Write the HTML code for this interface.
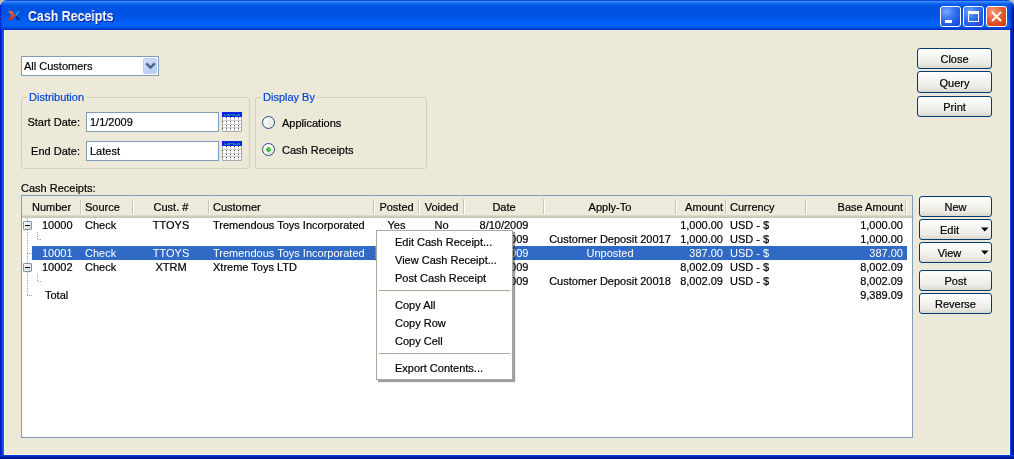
<!DOCTYPE html><html><head><meta charset="utf-8"><style>
*{box-sizing:border-box}
body{-webkit-text-stroke:0.2px currentColor;margin:0;width:1014px;height:459px;overflow:hidden;position:relative;background:#C9C2AC;font-family:"Liberation Sans",sans-serif;font-size:11px;color:#000}
.a{position:absolute}
.t{position:absolute;line-height:14px;white-space:nowrap;will-change:transform}
.btn{will-change:transform;position:absolute;border:1px solid #003C74;border-radius:3px;background:linear-gradient(to bottom,#FFFFFF 0%,#F5F4F0 40%,#ECEBE5 75%,#DCD8CC 100%);text-align:center;line-height:14px}
.inp{position:absolute;border:1px solid #7F9DB9;background:#fff}
.grp{position:absolute;border:1px solid #D0D0BF;border-radius:3px}
.gt{will-change:transform;position:absolute;line-height:14px;color:#0046D5;background:#ECE9D8;padding:0 2px;white-space:nowrap}
.sep{position:absolute;width:2px;top:199px;height:15px;border-left:1px solid #C7C5B2;border-right:1px solid #FFFFFF}
</style></head><body>
<div class="a" style="left:0;top:0;width:1014px;height:30px;border-radius:7px 7px 0 0;background:linear-gradient(to bottom,#1448DC 0px,#1448DC 1px,#3E92FF 1px,#2F84FA 2px,#1870F4 3px,#0A5EEC 4px,#0054E4 6px,#0052E2 14px,#0056E8 18px,#005EF2 21px,#0064FA 24px,#0062F8 26px,#0054EA 27px,#0046DA 28px,#003CCE 29px,#0036C4 30px)"></div>
<div class="a" style="left:0;top:5px;width:3px;height:25px;background:linear-gradient(to right,#0018C8 0px,#0A36DA 1px,rgba(14,80,236,0.5) 2px,rgba(14,80,236,0) 3px)"></div>
<div class="a" style="left:0;top:30px;width:4px;height:429px;background:linear-gradient(to right,#0012C4 0px,#0018CC 1px,#0840E4 2px,#0E5AF2 3px,#0E5EF4 4px)"></div>
<div class="a" style="left:1008px;top:2px;width:6px;height:28px;background:linear-gradient(to right,rgba(10,72,234,0) 0px,rgba(0,60,220,.35) 2px,rgba(0,54,212,.7) 3px,#0026B0 4px,#00168C 5px,#00168C 6px);-webkit-mask-image:linear-gradient(to bottom,transparent 0px,#000 8px)"></div>
<div class="a" style="left:1010px;top:30px;width:4px;height:429px;background:linear-gradient(to right,#0A48EA 0px,#0036D4 1px,#0022A8 2px,#00168C 3px,#00168C 4px)"></div>
<div class="a" style="left:0;top:455px;width:1014px;height:4px;background:linear-gradient(to bottom,#0A48EA 0px,#0036D4 1px,#0022A8 2px,#00168C 3px,#00168C 4px)"></div>
<div class="a" style="left:0;top:455px;width:4px;height:4px;background:linear-gradient(to bottom,#0A40E2 0px,#0030C8 1px,#0020A8 2px,#00168C 3px)"></div>
<div class="a" style="left:4px;top:30px;width:1006px;height:425px;background:#ECE9D8;box-shadow:inset 1px 0 #FBF6E2,inset -1px -1px #FBF6E2"></div>
<svg class="a" style="left:8px;top:11px" width="13" height="9" viewBox="0 0 13 9">
<defs><linearGradient id="or" x1="0" y1="0" x2="0" y2="1"><stop offset="0" stop-color="#E07030"/><stop offset="1" stop-color="#C82A1A"/></linearGradient></defs>
<path d="M0 0 H4 L7.5 4.5 L4 9 H0 L3.5 4.5 Z" fill="url(#or)"/>
<path d="M7 4.2 L10 0 H12 L8.3 4.8 Z" fill="#1AA6E0"/>
<path d="M7.4 5.6 L8.6 4.9 L12.2 9 H9.2 Z" fill="#0A2478"/>
</svg>
<div class="t" style="left:27.5px;top:7px;font-size:14px;font-weight:bold;color:#fff;-webkit-text-stroke:0;line-height:18px;text-shadow:1px 1px #0A1E8C;transform:scaleX(0.885);transform-origin:0 0">Cash Receipts</div>
<div class="a" style="left:940px;top:6px;width:21px;height:21px;border:1px solid #fff;border-radius:3px;background:radial-gradient(circle at 30% 25%,#7AA8FF 0%,#3C78F0 35%,#2258E8 70%,#1846D0 100%);overflow:hidden"><div class="a" style="left:4px;top:13px;width:7px;height:3px;background:#fff"></div></div>
<div class="a" style="left:963px;top:6px;width:21px;height:21px;border:1px solid #fff;border-radius:3px;background:radial-gradient(circle at 30% 25%,#7AA8FF 0%,#3C78F0 35%,#2258E8 70%,#1846D0 100%);overflow:hidden"><div class="a" style="left:4px;top:4px;width:11px;height:11px;border:1px solid #fff;border-top-width:3px"></div></div>
<div class="a" style="left:986px;top:6px;width:21px;height:21px;border:1px solid #fff;border-radius:3px;background:radial-gradient(circle at 30% 25%,#F0A080 0%,#E86A40 35%,#D84818 75%,#C03808 100%);overflow:hidden"><svg class="a" style="left:0;top:0" width="19" height="19"><path d="M5 5 L14 14 M14 5 L5 14" stroke="#fff" stroke-width="2"/></svg></div>
<div class="inp" style="left:21px;top:56px;width:138px;height:20px"></div>
<div class="t" style="left:24px;top:59px;">All Customers</div>
<div class="a" style="left:143px;top:58px;width:14px;height:16px;border-radius:2px;background:linear-gradient(135deg,#D8E2FB,#C2D3F8 50%,#B2C8F6);border:1px solid #BCCDF4"></div>
<svg class="a" style="left:143px;top:58px" width="15" height="16"><path d="M3.3 5.3 L7.5 9.5 L11.7 5.3" stroke="#4D6185" stroke-width="2.4" fill="none"/></svg>
<div class="grp" style="left:21px;top:97px;width:229px;height:72px"></div>
<div class="gt" style="left:27px;top:90px">Distribution</div>
<div class="grp" style="left:255px;top:97px;width:172px;height:72px"></div>
<div class="gt" style="left:261px;top:90px">Display By</div>
<div class="t" style="left:26px;top:115px;width:54px;text-align:right;">Start Date:</div>
<div class="inp" style="left:86px;top:112px;width:133px;height:20px"></div>
<div class="t" style="left:90px;top:115px;">1/1/2009</div>
<div class="t" style="left:26px;top:144px;width:54px;text-align:right;">End Date:</div>
<div class="inp" style="left:86px;top:141px;width:133px;height:20px"></div>
<div class="t" style="left:90px;top:144px;">Latest</div>
<svg class="a" style="left:222px;top:112px" width="20" height="20" viewBox="0 0 20 20">
<rect x="0" y="0" width="20" height="20" fill="#FFFFFF"/>
<rect x="0" y="0" width="20" height="5" fill="#0A22E6"/>
<rect x="2" y="2" width="16" height="2" fill="#1A78C8"/>
<rect x="3" y="2" width="2" height="1" fill="#103070"/><rect x="8" y="3" width="3" height="1" fill="#103070"/><rect x="13" y="2" width="2" height="1" fill="#103070"/>
<path d="M4.5 5 V20 M8.5 5 V20 M12.5 5 V20 M16.5 5 V20 M0 8.5 H20 M0 12.5 H20 M0 15.5 H20" stroke="#CFCFCF" stroke-width="1"/>
<path d="M0.5 5 V19.5 H19.5 V5" stroke="#A8A8A8" stroke-width="1" fill="none"/>
<rect x="4" y="5" width="1" height="1" fill="#585858"/><rect x="8" y="5" width="1" height="1" fill="#585858"/><rect x="12" y="5" width="1" height="1" fill="#585858"/><rect x="16" y="5" width="1" height="1" fill="#585858"/><rect x="0" y="9" width="1" height="1" fill="#585858"/><rect x="4" y="9" width="1" height="1" fill="#585858"/><rect x="8" y="9" width="1" height="1" fill="#585858"/><rect x="12" y="9" width="1" height="1" fill="#585858"/><rect x="16" y="9" width="1" height="1" fill="#585858"/><rect x="4" y="13" width="1" height="1" fill="#585858"/><rect x="8" y="13" width="1" height="1" fill="#585858"/><rect x="12" y="13" width="1" height="1" fill="#585858"/><rect x="16" y="13" width="1" height="1" fill="#585858"/><rect x="0" y="16" width="1" height="1" fill="#585858"/><rect x="4" y="16" width="1" height="1" fill="#585858"/><rect x="8" y="16" width="1" height="1" fill="#585858"/><rect x="12" y="16" width="1" height="1" fill="#585858"/><rect x="16" y="16" width="1" height="1" fill="#585858"/></svg>
<svg class="a" style="left:222px;top:141px" width="20" height="20" viewBox="0 0 20 20">
<rect x="0" y="0" width="20" height="20" fill="#FFFFFF"/>
<rect x="0" y="0" width="20" height="5" fill="#0A22E6"/>
<rect x="2" y="2" width="16" height="2" fill="#1A78C8"/>
<rect x="3" y="2" width="2" height="1" fill="#103070"/><rect x="8" y="3" width="3" height="1" fill="#103070"/><rect x="13" y="2" width="2" height="1" fill="#103070"/>
<path d="M4.5 5 V20 M8.5 5 V20 M12.5 5 V20 M16.5 5 V20 M0 8.5 H20 M0 12.5 H20 M0 15.5 H20" stroke="#CFCFCF" stroke-width="1"/>
<path d="M0.5 5 V19.5 H19.5 V5" stroke="#A8A8A8" stroke-width="1" fill="none"/>
<rect x="4" y="5" width="1" height="1" fill="#585858"/><rect x="8" y="5" width="1" height="1" fill="#585858"/><rect x="12" y="5" width="1" height="1" fill="#585858"/><rect x="16" y="5" width="1" height="1" fill="#585858"/><rect x="0" y="9" width="1" height="1" fill="#585858"/><rect x="4" y="9" width="1" height="1" fill="#585858"/><rect x="8" y="9" width="1" height="1" fill="#585858"/><rect x="12" y="9" width="1" height="1" fill="#585858"/><rect x="16" y="9" width="1" height="1" fill="#585858"/><rect x="4" y="13" width="1" height="1" fill="#585858"/><rect x="8" y="13" width="1" height="1" fill="#585858"/><rect x="12" y="13" width="1" height="1" fill="#585858"/><rect x="16" y="13" width="1" height="1" fill="#585858"/><rect x="0" y="16" width="1" height="1" fill="#585858"/><rect x="4" y="16" width="1" height="1" fill="#585858"/><rect x="8" y="16" width="1" height="1" fill="#585858"/><rect x="12" y="16" width="1" height="1" fill="#585858"/><rect x="16" y="16" width="1" height="1" fill="#585858"/></svg>
<svg class="a" style="left:262px;top:116px" width="13" height="13" viewBox="0 0 13 13">
<defs><radialGradient id="rg116" cx="0.7" cy="0.7" r="0.8"><stop offset="0" stop-color="#E6E6DD"/><stop offset="0.6" stop-color="#F6F6F2"/><stop offset="1" stop-color="#FFFFFF"/></radialGradient></defs>
<circle cx="6.5" cy="6.5" r="6" fill="url(#rg116)" stroke="#1C5180" stroke-width="1"/></svg>
<svg class="a" style="left:262px;top:143px" width="13" height="13" viewBox="0 0 13 13">
<defs><radialGradient id="rg143" cx="0.7" cy="0.7" r="0.8"><stop offset="0" stop-color="#E6E6DD"/><stop offset="0.6" stop-color="#F6F6F2"/><stop offset="1" stop-color="#FFFFFF"/></radialGradient></defs>
<circle cx="6.5" cy="6.5" r="6" fill="url(#rg143)" stroke="#1C5180" stroke-width="1"/><path d="M6.5 3.6 L9.4 6.5 L6.5 9.4 L3.6 6.5 Z" fill="#2AB02A"/><path d="M6.5 4.6 L8 6.1 L6.5 7.6 L5 6.1 Z" fill="#60D860"/></svg>
<div class="t" style="left:282px;top:116px;">Applications</div>
<div class="t" style="left:282px;top:143px;">Cash Receipts</div>
<div class="btn" style="left:917px;top:48px;width:75px;height:21px;padding-top:3px">Close</div>
<div class="btn" style="left:917px;top:71px;width:75px;height:22px;padding-top:4px">Query</div>
<div class="btn" style="left:917px;top:96px;width:75px;height:21px;padding-top:3px">Print</div>
<div class="t" style="left:21px;top:181px;">Cash Receipts:</div>
<div class="a" style="left:21px;top:195px;width:892px;height:243px;border:1px solid #7F9DB9;background:#fff"></div>
<div class="a" style="left:22px;top:196px;width:890px;height:22px;background:linear-gradient(to bottom,#EBEADB 0px,#EBEADB 19px,#E2DECD 19px,#D6D2C2 20px,#CBC7B8 21px,#CBC7B8 22px)"></div>
<div class="sep" style="left:80px"></div>
<div class="sep" style="left:132px"></div>
<div class="sep" style="left:208px"></div>
<div class="sep" style="left:373px"></div>
<div class="sep" style="left:418px"></div>
<div class="sep" style="left:463px"></div>
<div class="sep" style="left:543px"></div>
<div class="sep" style="left:675px"></div>
<div class="sep" style="left:725px"></div>
<div class="sep" style="left:805px"></div>
<div class="sep" style="left:905px"></div>
<div class="t" style="left:22px;top:200px;width:59px;text-align:center;">Number</div>
<div class="t" style="left:85px;top:200px;">Source</div>
<div class="t" style="left:133px;top:200px;width:76px;text-align:center;">Cust. #</div>
<div class="t" style="left:213px;top:200px;">Customer</div>
<div class="t" style="left:374px;top:200px;width:45px;text-align:center;">Posted</div>
<div class="t" style="left:419px;top:200px;width:45px;text-align:center;">Voided</div>
<div class="t" style="left:464px;top:200px;width:80px;text-align:center;">Date</div>
<div class="t" style="left:544px;top:200px;width:132px;text-align:center;">Apply-To</div>
<div class="t" style="left:676px;top:200px;width:47px;text-align:right;">Amount</div>
<div class="t" style="left:730px;top:200px;">Currency</div>
<div class="t" style="left:806px;top:200px;width:97px;text-align:right;">Base Amount</div>
<div class="a" style="left:32px;top:246px;width:875px;height:14px;background:#316AC5"></div>
<div class="a" style="left:375px;top:247px;width:1px;height:12px;background:repeating-linear-gradient(to bottom,#E8A040 0 1px,transparent 1px 2px)"></div>
<div class="t" style="left:42px;top:218px;">10000</div>
<div class="t" style="left:85px;top:218px;">Check</div>
<div class="t" style="left:133px;top:218px;width:76px;text-align:center;">TTOYS</div>
<div class="t" style="left:213px;top:218px;">Tremendous Toys Incorporated</div>
<div class="t" style="left:374px;top:218px;width:45px;text-align:center;">Yes</div>
<div class="t" style="left:419px;top:218px;width:45px;text-align:center;">No</div>
<div class="t" style="left:464px;top:218px;width:80px;text-align:center;">8/10/2009</div>
<div class="t" style="left:676px;top:218px;width:47px;text-align:right;">1,000.00</div>
<div class="t" style="left:730px;top:218px;">USD - $</div>
<div class="t" style="left:806px;top:218px;width:97px;text-align:right;">1,000.00</div>
<div class="t" style="left:464px;top:232px;width:80px;text-align:center;">8/10/2009</div>
<div class="t" style="left:544px;top:232px;width:132px;text-align:center;">Customer Deposit 20017</div>
<div class="t" style="left:676px;top:232px;width:47px;text-align:right;">1,000.00</div>
<div class="t" style="left:730px;top:232px;">USD - $</div>
<div class="t" style="left:806px;top:232px;width:97px;text-align:right;">1,000.00</div>
<div class="t" style="left:42px;top:246px;color:#fff;-webkit-text-stroke:0;">10001</div>
<div class="t" style="left:85px;top:246px;color:#fff;-webkit-text-stroke:0;">Check</div>
<div class="t" style="left:133px;top:246px;width:76px;text-align:center;color:#fff;-webkit-text-stroke:0;">TTOYS</div>
<div class="t" style="left:213px;top:246px;color:#fff;-webkit-text-stroke:0;">Tremendous Toys Incorporated</div>
<div class="t" style="left:374px;top:246px;width:45px;text-align:center;color:#fff;-webkit-text-stroke:0;">No</div>
<div class="t" style="left:419px;top:246px;width:45px;text-align:center;color:#fff;-webkit-text-stroke:0;">No</div>
<div class="t" style="left:464px;top:246px;width:80px;text-align:center;color:#fff;-webkit-text-stroke:0;">8/10/2009</div>
<div class="t" style="left:544px;top:246px;width:132px;text-align:center;color:#fff;-webkit-text-stroke:0;">Unposted</div>
<div class="t" style="left:676px;top:246px;width:47px;text-align:right;color:#fff;-webkit-text-stroke:0;">387.00</div>
<div class="t" style="left:730px;top:246px;color:#fff;-webkit-text-stroke:0;">USD - $</div>
<div class="t" style="left:806px;top:246px;width:97px;text-align:right;color:#fff;-webkit-text-stroke:0;">387.00</div>
<div class="t" style="left:42px;top:260px;">10002</div>
<div class="t" style="left:85px;top:260px;">Check</div>
<div class="t" style="left:133px;top:260px;width:76px;text-align:center;">XTRM</div>
<div class="t" style="left:213px;top:260px;">Xtreme Toys LTD</div>
<div class="t" style="left:374px;top:260px;width:45px;text-align:center;">Yes</div>
<div class="t" style="left:419px;top:260px;width:45px;text-align:center;">No</div>
<div class="t" style="left:464px;top:260px;width:80px;text-align:center;">8/10/2009</div>
<div class="t" style="left:676px;top:260px;width:47px;text-align:right;">8,002.09</div>
<div class="t" style="left:730px;top:260px;">USD - $</div>
<div class="t" style="left:806px;top:260px;width:97px;text-align:right;">8,002.09</div>
<div class="t" style="left:464px;top:274px;width:80px;text-align:center;">8/10/2009</div>
<div class="t" style="left:544px;top:274px;width:132px;text-align:center;">Customer Deposit 20018</div>
<div class="t" style="left:676px;top:274px;width:47px;text-align:right;">8,002.09</div>
<div class="t" style="left:730px;top:274px;">USD - $</div>
<div class="t" style="left:806px;top:274px;width:97px;text-align:right;">8,002.09</div>
<div class="t" style="left:45px;top:288px;">Total</div>
<div class="t" style="left:806px;top:288px;width:97px;text-align:right;">9,389.09</div>
<div class="a" style="left:27px;top:218px;width:1px;height:78px;background:repeating-linear-gradient(to bottom,#A0A0A0 0 1px,transparent 1px 2px)"></div>
<div class="a" style="left:27px;top:295px;width:6px;height:1px;background:repeating-linear-gradient(to right,#A0A0A0 0 1px,transparent 1px 2px)"></div>
<div class="a" style="left:27px;top:253px;width:5px;height:1px;background:repeating-linear-gradient(to right,#A0A0A0 0 1px,transparent 1px 2px)"></div>
<div class="a" style="left:37px;top:232px;width:1px;height:7px;background:repeating-linear-gradient(to bottom,#A0A0A0 0 1px,transparent 1px 2px)"></div>
<div class="a" style="left:38px;top:239px;width:4px;height:1px;background:repeating-linear-gradient(to right,#A0A0A0 0 1px,transparent 1px 2px)"></div>
<div class="a" style="left:37px;top:274px;width:1px;height:7px;background:repeating-linear-gradient(to bottom,#A0A0A0 0 1px,transparent 1px 2px)"></div>
<div class="a" style="left:38px;top:281px;width:4px;height:1px;background:repeating-linear-gradient(to right,#A0A0A0 0 1px,transparent 1px 2px)"></div>
<div class="a" style="left:23px;top:221px;width:9px;height:9px;border:1px solid #7A98AF;border-radius:1px;background:linear-gradient(to bottom right,#FFFFFF,#D8D3C4)"></div>
<div class="a" style="left:25px;top:225px;width:5px;height:1px;background:#000"></div>
<div class="a" style="left:23px;top:263px;width:9px;height:9px;border:1px solid #7A98AF;border-radius:1px;background:linear-gradient(to bottom right,#FFFFFF,#D8D3C4)"></div>
<div class="a" style="left:25px;top:267px;width:5px;height:1px;background:#000"></div>
<div class="btn" style="left:919px;top:196px;width:73px;height:21px;padding-top:3px">New</div>
<div class="btn" style="left:919px;top:219px;width:73px;height:21px;padding-top:3px"><span style="position:relative;left:-6px">Edit</span></div>
<svg class="a" style="left:981px;top:227px" width="9" height="6"><path d="M0 0.5 H7.5 L3.75 4.6 Z" fill="#000"/></svg>
<div class="btn" style="left:919px;top:242px;width:73px;height:21px;padding-top:3px"><span style="position:relative;left:-6px">View</span></div>
<svg class="a" style="left:981px;top:250px" width="9" height="6"><path d="M0 0.5 H7.5 L3.75 4.6 Z" fill="#000"/></svg>
<div class="btn" style="left:919px;top:270px;width:73px;height:21px;padding-top:3px">Post</div>
<div class="btn" style="left:919px;top:293px;width:73px;height:21px;padding-top:3px">Reverse</div>
<div class="a" style="left:376px;top:230px;width:137px;height:150px;border:1px solid #ACA899;background:#fff;box-shadow:2px 2px 1px rgba(0,0,0,0.38)"></div>
<div class="t" style="left:395px;top:235px;">Edit Cash Receipt...</div>
<div class="t" style="left:395px;top:253px;">View Cash Receipt...</div>
<div class="t" style="left:395px;top:271px;">Post Cash Receipt</div>
<div class="t" style="left:395px;top:298px;">Copy All</div>
<div class="t" style="left:395px;top:316px;">Copy Row</div>
<div class="t" style="left:395px;top:334px;">Copy Cell</div>
<div class="t" style="left:395px;top:361px;">Export Contents...</div>
<div class="a" style="left:379px;top:290px;width:131px;height:1px;background:#ACA899"></div>
<div class="a" style="left:379px;top:353px;width:131px;height:1px;background:#ACA899"></div>
</body></html>
